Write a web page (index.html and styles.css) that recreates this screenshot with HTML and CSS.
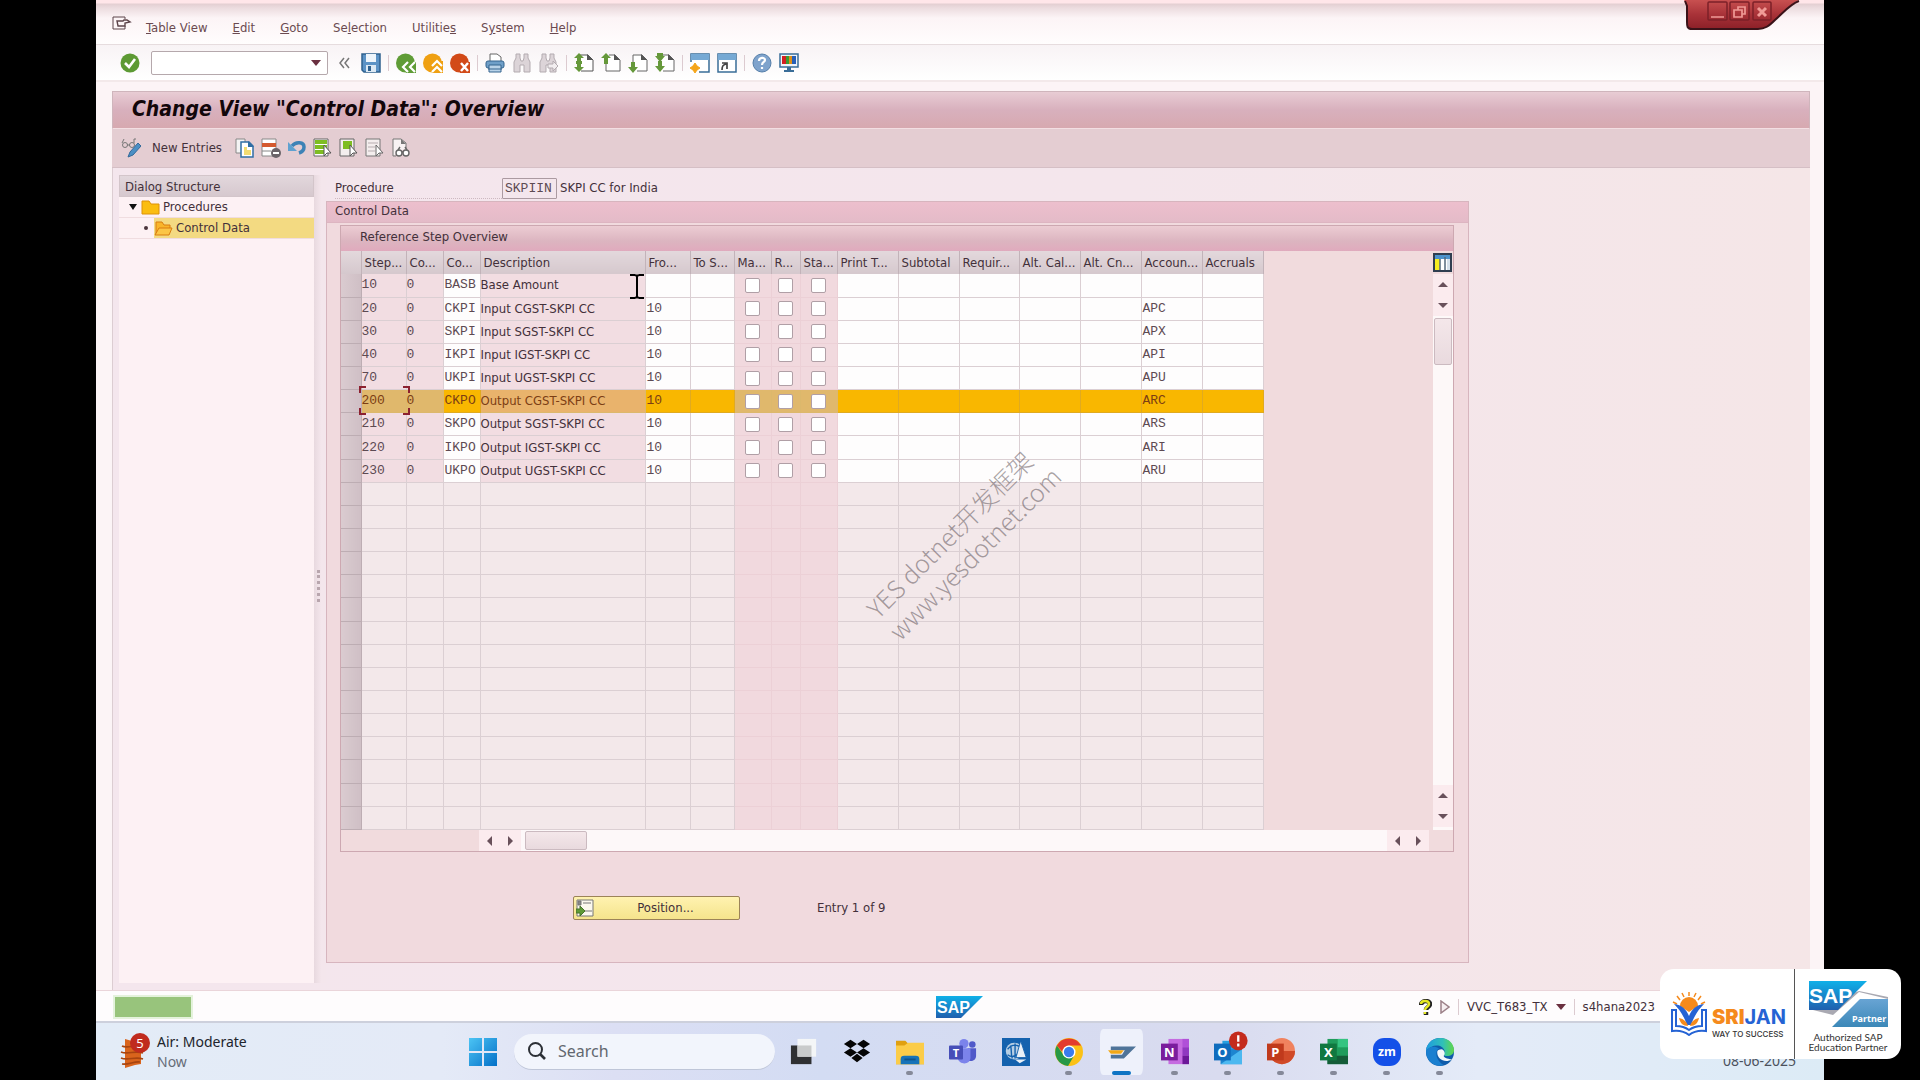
FILE: index.html
```html
<!DOCTYPE html>
<html lang="en">
<head>
    <meta charset="UTF-8">
    <meta name="viewport" content="width=device-width, initial-scale=1.0">
    <title>Change View "Control Data": Overview</title>
    <link rel="stylesheet" href="styles.css">
</head>
<body>
    <div class="desktop">
        <nav class="menubar">
            <svg class="menu-icon" width="20" height="16" viewBox="0 0 20 16" fill="none" stroke="#5c444a"><path d="M13 1H1v12h12v-3M13 1v2"/><path d="M5 5h6l1-1h3l3 2-5 1v3H6z" stroke-width="1.4"/></svg>
            <a href="#"><u>T</u>able View</a>
            <a href="#"><u>E</u>dit</a>
            <a href="#"><u>G</u>oto</a>
            <a href="#">Se<u>l</u>ection</a>
            <a href="#">Utilitie<u>s</u></a>
            <a href="#">S<u>y</u>stem</a>
            <a href="#"><u>H</u>elp</a>
        </nav>

        <div class="window-tab">
            <svg width="116" height="31" viewBox="0 0 116 31">
                <defs><linearGradient id="red" x1="0" y1="0" x2="0" y2="1"><stop offset="0" stop-color="#c85050"/><stop offset=".5" stop-color="#a83238"/><stop offset="1" stop-color="#8c2028"/></linearGradient></defs>
                <path d="M0 0h115c-9 4-16 13-24 20-6 6-10 9-17 9H8c-5 0-5-3-5-7V5z" fill="url(#red)"/>
                <path d="M1 1l2 5v16c0 4 0 7 5 7h66c7 0 11-3 17-9 8-7 15-16 24-19" fill="none" stroke="#3a1218" stroke-width="2"/>
                <g fill="none" stroke="#7c2028" stroke-width="1.5"><rect x="24" y="2" width="19" height="18" rx="1"/><rect x="46" y="2" width="19" height="18" rx="1"/><rect x="69" y="2" width="18" height="18" rx="1"/></g>
                <g fill="none" stroke="#f09a96" stroke-width="1.7"><path d="M27 17h13M50 10h8v7h-8zM54 10V7h7v7h-3"/><path d="M74 8l8 8M82 8l-8 8" stroke-width="3"/></g>
            </svg>
        </div>

        <div class="toolbar">
            <button class="icon" title="Enter"><svg viewBox="0 0 20 20"><circle cx="10" cy="10" r="9.5" fill="#5d9a34"/><path d="M5 10l4 4 6-8" fill="none" stroke="#fff" stroke-width="2.6"/></svg></button>
            <div class="command">
                <input type="text" aria-label="Command">
                <button title="History"><svg width="10" height="6" viewBox="0 0 10 6"><path d="M0 0h10L5 6z" fill="#6a3040"/></svg></button>
            </div>
            <button class="collapse" title="Collapse"><svg width="11" height="12" viewBox="0 0 11 12" fill="none" stroke="#777" stroke-width="1.5"><path d="M5 1L1 6l4 5M10 1L6 6l4 5"/></svg></button>
            <button class="icon" title="Save"><svg viewBox="0 0 20 20"><path d="M1 1h18v18H3l-2-2z" fill="#5c93c6" stroke="#2f618f" stroke-width="1.5"/><path d="M5 1h10v8H5z" fill="#eef5fb"/><path d="M5 12h10v7H5z" fill="#dce9f4"/><path d="M7 13h3v5H7z" fill="#2f618f"/></svg></button>
            <i class="sep"></i>
            <button class="icon" title="Back"><svg viewBox="0 0 20 20"><circle cx="9.500" cy="10" r="9.500" fill="#5f9c36"/><path d="M10 9h10v11H10z" fill="#5f9c36"/><path d="M12 9l-5 5 5 5M19 9l-5 5 5 5" fill="none" stroke="#fff" stroke-width="2.200"/></svg></button>
            <button class="icon" title="Exit"><svg viewBox="0 0 20 20"><circle cx="9.500" cy="10" r="9.500" fill="#efa012"/><path d="M9 8h11v12H9z" fill="#efa012"/><path d="M9 13l5-5 5 5M9 19l5-5 5 5" fill="none" stroke="#fff" stroke-width="2.200"/></svg></button>
            <button class="icon" title="Cancel"><svg viewBox="0 0 20 20"><circle cx="9.500" cy="10" r="9.500" fill="#d24a18"/><path d="M10 9h10v11H10z" fill="#d24a18"/><path d="M11 10l7 8M18 10l-7 8" stroke="#fff" stroke-width="2.400"/></svg></button>
            <i class="sep"></i>
            <button class="icon" title="Print"><svg viewBox="0 0 20 20"><path d="M5 8V1h7l4 3v4" fill="#fff" stroke="#666"/><rect x="1" y="8" width="18" height="7" rx="2" fill="#6f9fc8" stroke="#34658f"/><path d="M4 12h12v7H4z" fill="#b8d2e8" stroke="#34658f"/><path d="M3 16h14" stroke="#34658f"/></svg></button>
            <button class="icon" title="Find"><svg viewBox="0 0 20 20" fill="#dcd4d8" stroke="#b3abb0"><path d="M2 19V9l2-4V1h4v4l1 3h2l1-3V1h4v4l2 4v10h-6v-7H8v7z"/></svg></button>
            <button class="icon" title="Find next"><svg viewBox="0 0 20 20" fill="#dcd4d8" stroke="#b3abb0"><path d="M1 19V9l2-4V1h4v4l1 3h2l1-3V1h4v4l2 4v10h-6v-7H7v7z"/><path d="M9 11h5V8l5 5-5 5v-3H9z" fill="#f2eef0"/></svg></button>
            <i class="sep"></i>
            <button class="icon" title="First page"><svg viewBox="0 0 20 20"><path d="M6 2h8l5 5v11H7" fill="#fff" stroke="#555"/><path d="M13 1v6h6z" fill="#555"/><path d="M5 0l5 5H7v3H3V5H0zM3 11h4v3h3l-5 5-5-5h3zM2 8h6v3H2z" fill="#65983a"/></svg></button>
            <button class="icon" title="Previous page"><svg viewBox="0 0 20 20"><path d="M8 2h6l5 5v11H5V10" fill="#fff" stroke="#666"/><path d="M13 1v6h6z" fill="#555"/><path d="M5 0l5 5H7v6H3V5H0z" fill="#65983a"/></svg></button>
            <button class="icon" title="Next page"><svg viewBox="0 0 20 20"><path d="M5 11V2h9l5 5v11H9" fill="#fff" stroke="#666"/><path d="M13 1v6h6z" fill="#555"/><path d="M5 20l5-6H7V9H3v5H0z" fill="#65983a"/></svg></button>
            <button class="icon" title="Last page"><svg viewBox="0 0 20 20"><path d="M6 2h8l5 5v11H8" fill="#fff" stroke="#666"/><path d="M13 1v6h6z" fill="#555"/><path d="M2 0h6v3h2l-5 6-5-6h2zM3 8h4v5h3l-5 6-5-6h3z" fill="#65983a"/></svg></button>
            <i class="sep"></i>
            <button class="icon" title="New session"><svg viewBox="0 0 20 20"><path d="M1 1h18v18H1z" fill="#fff" stroke="#3a6d98" stroke-width="1.500"/><path d="M1 1h18v6H1z" fill="#76a9d4"/><path d="M0 9h9v11H0z" fill="#fff"/><path d="M5 10l2 3 3 2-3 2-2 3-2-3-3-2 3-2z" fill="#f5a51a" stroke="#f5a51a"/></svg></button>
            <button class="icon" title="Shortcut"><svg viewBox="0 0 20 20"><path d="M1 1h18v18H1z" fill="#fff" stroke="#3a6d98" stroke-width="1.500"/><path d="M1 1h18v6H1z" fill="#76a9d4"/><path d="M5 17c0-4 1-5 4-6M5 10h5v6" fill="none" stroke="#444" stroke-width="1.700"/></svg></button>
            <i class="sep"></i>
            <button class="icon" title="Help"><svg viewBox="0 0 20 20"><circle cx="10" cy="10" r="9" fill="#7fa3cc" stroke="#567fa9"/><path d="M7 8c0-4 6-4 6-1 0 2-3 2-3 5M10 14v2" fill="none" stroke="#fff" stroke-width="2.200"/></svg></button>
            <button class="icon" title="Layout"><svg viewBox="0 0 20 20"><path d="M1 1h18v13H1z" fill="#eef4fa" stroke="#3a6d98" stroke-width="1.500"/><path d="M3 3h4v8H3z" fill="#d41f1f"/><path d="M7 3h3v8H7z" fill="#3b9a32"/><path d="M10 3h3v8h-3z" fill="#e09018"/><path d="M13 3h4v8h-4z" fill="#2860b8"/><path d="M8 14h4v3h3v2H5v-2h3z" fill="#3a6d98"/></svg></button>
        </div>

        <div class="frame">
            <h1>Change View "Control Data": Overview</h1>

            <div class="app-toolbar">
                <button class="icon" title="Display/Change"><svg viewBox="0 0 20 20"><g fill="none" stroke="#777"><circle cx="4" cy="7" r="2.500"/><circle cx="11" cy="7" r="2.500"/><path d="M1 5l2-4M13 5V1h2M6 7h3"/></g><path d="M17 5l3 3-8 9-5 2 2-5z" fill="#4b8fc4" stroke="#33699a"/></svg></button>
                <button class="new-entries">New Entries</button>
                <button class="icon" title="Copy"><svg viewBox="0 0 20 20"><path d="M1 1h9v14H1z" fill="#f4f4f4" stroke="#888"/><path d="M6 4h8l4 4v11H6z" fill="#fff" stroke="#2f6ea5" stroke-width="1.500"/><path d="M13 3l6 6h-6z" fill="#2f6ea5"/><path d="M9 9h3v3h4v5H9z" fill="#f2dc72"/></svg></button>
                <button class="icon" title="Delete"><svg viewBox="0 0 20 20"><path d="M1 1h14v17H1z" fill="#fff" stroke="#888"/><path d="M1 5h14v4H1z" fill="#d45a30"/><path d="M1 13h9" stroke="#888"/><circle cx="15" cy="15" r="5" fill="#6b6469"/><path d="M12 15h6" stroke="#fff" stroke-width="2"/></svg></button>
                <button class="icon" title="Undo"><svg viewBox="0 0 20 20"><path d="M5 8c4-5 12-4 12 1 0 3-2 5-5 6" fill="none" stroke="#3d82b6" stroke-width="3.500"/><path d="M1 4v9h9z" fill="#5fa1d0"/></svg></button>
                <button class="icon" title="Select all"><svg viewBox="0 0 20 20"><path d="M1 1h14v17H1z" fill="#fff" stroke="#666"/><path d="M2 2h12v4H2zM2 7h12v4H2zM2 12h12v4H2z" fill="#7ebd22"/><path d="M11 7v11l3-3h4z" fill="#fff" stroke="#555"/></svg></button>
                <button class="icon" title="Select block"><svg viewBox="0 0 20 20"><path d="M1 1h14v17H1z" fill="#f4eeee" stroke="#666"/><path d="M4 3h9v8H4z" fill="#7ebd22"/><path d="M11 7v11l3-3h4z" fill="#fff" stroke="#555"/></svg></button>
                <button class="icon" title="Deselect all"><svg viewBox="0 0 20 20"><path d="M1 1h14v17H1z" fill="#f4eeee" stroke="#777"/><path d="M3 5h10M3 9h7M3 13h7" stroke="#b7adb0"/><path d="M11 7v11l3-3h4z" fill="#fff" stroke="#666"/></svg></button>
                <button class="icon" title="Print list"><svg viewBox="0 0 20 20"><path d="M2 18V1h8l5 4v5" fill="#f8f2f3" stroke="#777"/><path d="M10 1v5h5z" fill="#777"/><path d="M2 18h3" stroke="#777"/><g fill="#fff" stroke="#666" stroke-width="1.400"><circle cx="8" cy="15" r="3"/><circle cx="15" cy="15" r="3"/><path d="M7 12l2-3M16 12l-2-3M11 14h1"/></g></svg></button>
            </div>

            <div class="main">
                <aside class="tree">
                    <h2>Dialog Structure</h2>
                    <a href="#" class="node">
                        <svg class="caret" width="8" height="6" viewBox="0 0 8 6"><path d="M0 0h8L4 6z" fill="#111"/></svg>
                        <svg width="19" height="15" viewBox="0 0 19 15"><path d="M1 1h7l2 3h8v10H1z" fill="#fbbd10" stroke="#dd9208"/></svg>
                        <span>Procedures</span>
                    </a>
                    <a href="#" class="node child">
                        <i class="dot"></i>
                        <span class="picked">
                            <svg width="19" height="15" viewBox="0 0 19 15"><path d="M2 14V1h6l2 3h6v3" fill="#f9b52a" stroke="#d97d10"/><path d="M1 14l4-7h13l-3 7z" fill="#fbc545" stroke="#d97d10"/></svg>
                            Control Data
                        </span>
                    </a>
                </aside>

                <div class="splitter"><i></i></div>

                <main class="content">
                    <div class="procedure">
                        <label for="procedure">Procedure</label>
                        <input type="text" id="procedure" value="SKPIIN" readonly>
                        <span>SKPI CC for India</span>
                    </div>

                    <section class="group">
                        <h2>Control Data</h2>
                        <div class="table-control">
                            <h3>Reference Step Overview</h3>
                            <div class="table-area">
                                <table>
                                    <colgroup>
                                        <col class="w20"><col class="w45"><col class="w37"><col class="w37"><col class="w165">
                                        <col class="w45"><col class="w44"><col class="w37"><col class="w29"><col class="w37">
                                        <col class="w61"><col class="w61"><col class="w60"><col class="w61"><col class="w61"><col class="w61"><col class="w61">
                                    </colgroup>
                                    <thead>
                                        <tr>
                                            <th></th><th>Step...</th><th>Co...</th><th>Co...</th><th>Description</th><th>Fro...</th><th>To S...</th>
                                            <th>Ma...</th><th>R...</th><th>Sta...</th><th>Print T...</th><th>Subtotal</th><th>Requir...</th>
                                            <th>Alt. Cal...</th><th>Alt. Cn...</th><th>Accoun...</th><th>Accruals</th>
                                        </tr>
                                    </thead>
                                    <tbody id="steps"></tbody>
                                </table>
                                <div class="vscroll">
                                    <button class="config" title="Configuration"><svg width="19" height="19" viewBox="0 0 19 19"><path d="M1 1h17v17H1z" fill="#fff" stroke="#2f3e50" stroke-width="2"/><path d="M2 2h15v4H2z" fill="#4d93cc"/><path d="M2 6h5v11H2z" fill="#f5ee20"/><path d="M7 6v11M12 4v13" stroke="#56697c" stroke-width="1.500"/><path d="M14 6h3v11h-3z" fill="#d5e0ea"/></svg></button>
                                    <button class="arrow" title="Up"><svg width="10" height="5" viewBox="0 0 10 5"><path d="M0 5l5-5 5 5z"/></svg></button>
                                    <button class="arrow" title="Down"><svg width="10" height="5" viewBox="0 0 10 5"><path d="M0 0l5 5 5-5z"/></svg></button>
                                    <div class="track"><div class="thumb"></div></div>
                                    <button class="arrow" title="Page up"><svg width="10" height="5" viewBox="0 0 10 5"><path d="M0 5l5-5 5 5z"/></svg></button>
                                    <button class="arrow" title="Page down"><svg width="10" height="5" viewBox="0 0 10 5"><path d="M0 0l5 5 5-5z"/></svg></button>
                                </div>
                            </div>
                            <div class="hscroll">
                                <button class="arrow" title="Left"><svg width="5" height="10" viewBox="0 0 5 10"><path d="M5 0L0 5l5 5z"/></svg></button>
                                <button class="arrow" title="Right"><svg width="5" height="10" viewBox="0 0 5 10"><path d="M0 0l5 5-5 5z"/></svg></button>
                                <div class="track"><div class="thumb"></div></div>
                                <button class="arrow" title="Page left"><svg width="5" height="10" viewBox="0 0 5 10"><path d="M5 0L0 5l5 5z"/></svg></button>
                                <button class="arrow" title="Page right"><svg width="5" height="10" viewBox="0 0 5 10"><path d="M0 0l5 5-5 5z"/></svg></button>
                            </div>
                        </div>
                        <div class="position-row">
                            <button class="position">
                                <svg width="18" height="18" viewBox="0 0 18 18"><path d="M1 1h16v16H1z" fill="#fbf8ee" stroke="#777"/><path d="M2 2h3v4H2zM7 4h8M9 12h7" fill="#888" stroke="#777"/><path d="M0 10h4V7l5 5-5 5v-3H0z" fill="#5f9a36" stroke="#46742a"/></svg>
                                <span>Position...</span>
                            </button>
                            <span>Entry 1 of 9</span>
                        </div>
                    </section>
                </main>
            </div>
        </div>

        <div class="statusbar">
            <div class="progress"></div>
            <svg class="sap-logo" width="47" height="22" viewBox="0 0 47 22">
                <defs><linearGradient id="sap" x1="0" y1="0" x2="0" y2="1"><stop offset="0" stop-color="#10b0e8"/><stop offset="1" stop-color="#1f5fae"/></linearGradient></defs>
                <path d="M0 0h47L25 22H0z" fill="url(#sap)"/><text x="1" y="17" class="sap-text" font-size="16">SAP</text>
            </svg>
            <div class="status-right">
                <svg width="13" height="17" viewBox="0 0 13 17"><path d="M2 6c0-5 9-5 9-1 0 3-4 3-4 6M7 13v3" fill="none" stroke="#222" stroke-width="4.500"/><path d="M2 5c0-4 8-4 8 0 0 3-4 3-4 6M6 13v2" fill="none" stroke="#e5e822" stroke-width="2.500"/></svg>
                <svg width="10" height="14" viewBox="0 0 10 14"><path d="M1 1l8 6-8 6z" fill="#f6eef0" stroke="#9c8088" stroke-width="1.500"/></svg>
                <i class="sep"></i>
                <span>VVC_T683_TX</span>
                <svg width="10" height="6" viewBox="0 0 10 6"><path d="M0 0h10L5 6z" fill="#6a3040"/></svg>
                <i class="sep"></i>
                <span>s4hana2023</span>
            </div>
        </div>

        <footer class="taskbar">
            <div class="weather">
                <svg width="30" height="36" viewBox="0 0 30 36">
                    <path d="M5 7l7 2 5 2 4-1v22l-6 1-10 3z" fill="#d9641c"/>
                    <path d="M2 14c5 3 14-2 22 1M1 20c7 3 14-2 22 1M1 26c7 3 14-2 22 1M2 32c7 1 12-3 18-2" fill="none" stroke="#a8440f" stroke-width="1.600"/>
                    <circle cx="20" cy="11" r="10" fill="#c02b1e"/><text x="20" y="16" text-anchor="middle" class="badge-text">5</text>
                </svg>
                <p>Air: Moderate<br><small>Now</small></p>
            </div>
            <button class="start" title="Start"><svg width="28" height="28" viewBox="0 0 28 28"><defs><linearGradient id="win" x1="0" y1="0" x2="1" y2="1"><stop offset="0" stop-color="#4cc4f4"/><stop offset="1" stop-color="#0470c8"/></linearGradient></defs><path d="M0 0h13v13H0zM15 0h13v13H15zM0 15h13v13H0zM15 15h13v13H15z" fill="url(#win)"/></svg></button>
            <label class="search">
                <svg width="18" height="18" viewBox="0 0 18 18" fill="none" stroke="#2c3036" stroke-width="2"><circle cx="7.500" cy="7.500" r="6.500"/><path d="M12 12l5 5" stroke-width="2.600"/></svg>
                <input type="text" placeholder="Search">
            </label>
            <div class="apps">
                <button title="Task view"><svg viewBox="0 0 30 30"><path d="M1 8h22v20H1z" fill="#2f3032"/><path d="M8 1h20v19H8z" fill="#f4f6f7"/><path d="M8 8h15v12H8z" fill="#c9cbcb"/></svg></button>
                <button title="Dropbox"><svg viewBox="0 0 30 30"><path d="M8 2l7 4.500L8 11 1 6.500zM22 2l7 4.500-7 4.500-7-4.500zM8 11l7 4.500L8 20l-7-4.500zM22 11l7 4.500-7 4.500-7-4.500zM15 17l6 4.500-6 4.500-6-4.500z" fill="#050505"/></svg></button>
                <button title="File Explorer" class="open"><svg viewBox="0 0 30 30"><path d="M0 3h10l3 3h17v22H0z" fill="#e0a010"/><path d="M0 8h9l4-3h17v23H0z" fill="#fbcc48"/><path d="M5 28v-5c0-3 1-4 4-4h12c3 0 4 1 4 4v5z" fill="#1673b8"/><path d="M9 23h12" stroke="#0e548c" stroke-width="2"/></svg></button>
                <button title="Teams"><svg viewBox="0 0 30 30"><circle cx="16" cy="6" r="5" fill="#7b83eb"/><circle cx="25" cy="7" r="3.500" fill="#5059c9"/><path d="M20 11h9v8c0 5-5 7-9 5z" fill="#5059c9"/><path d="M9 11h14v10c0 8-12 9-14 0z" fill="#7b83eb"/><rect x="0" y="8" width="15" height="15" rx="1" fill="#464eb8"/><text x="7.500" y="20" text-anchor="middle" font-size="12">T</text></svg></button>
                <button title="SAP GUI"><svg viewBox="0 0 30 30"><path d="M0 0h30v30H0z" fill="#1462ae"/><circle cx="13" cy="14" r="9" fill="#b7cfe4"/><path d="M6 12c4-5 9-5 13-3M6 18c4 3 8 2 11-1M9 8c2 5 0 9 2 14M14 6v16" fill="none" stroke="#1462ae" stroke-width="1.500"/><path d="M20 3l6 18H15z" fill="#e8f0f7" stroke="#1462ae"/><path d="M14 23h12l-7 4z" fill="#e8f0f7"/></svg></button>
                <button title="Chrome" class="open"><svg viewBox="0 0 30 30"><circle cx="15" cy="15" r="15" fill="#fbc116"/><path d="M2 8a15 15 0 0 1 26 0H15a7 7 0 0 0-7 7z" fill="#e33b2e"/><path d="M2 8a15 15 0 0 0 12 22l7-12a7 7 0 0 1-12 0z" fill="#279847"/><circle cx="15" cy="15" r="7" fill="#fff"/><circle cx="15" cy="15" r="5.500" fill="#3a7cec"/></svg></button>
                <button title="SAP Logon" class="active"><svg viewBox="0 0 30 30"><path d="M3 9h27L17 22H3v-4h12l3-5H3z" fill="#4f7499"/><path d="M0 13h17l-3 4H3z" fill="#f2a818"/></svg></button>
                <button title="OneNote" class="open"><svg viewBox="0 0 30 30"><path d="M8 1h22v27H8z" fill="#c56be0"/><path d="M23 1h7v9h-7z" fill="#b050d8"/><path d="M23 10h7v9h-7z" fill="#9038c0"/><path d="M23 19h7v9h-7z" fill="#6c1898"/><path d="M0 6h18v18H0z" fill="#7a1d9c"/><text x="9" y="20" text-anchor="middle" font-size="14">N</text></svg></button>
                <button title="Outlook" class="open"><svg viewBox="0 0 30 30"><path d="M9 3h20v10H9z" fill="#28a0e0"/><path d="M7 12h23v16H7z" fill="#1c85d0"/><path d="M7 28l23-16v16z" fill="#4cb8f0"/><path d="M0 6h18v18H0z" fill="#0f6cbd"/><text x="9" y="20" text-anchor="middle" font-size="14">O</text><circle cx="26" cy="3" r="10" fill="#c42b1c"/><path d="M26-3v7M26 6v3" stroke="#fff" stroke-width="2.500"/></svg></button>
                <button title="PowerPoint" class="open"><svg viewBox="0 0 30 30"><circle cx="16" cy="14" r="14" fill="#f0825e"/><path d="M16 14h14a14 14 0 0 1-28 0z" fill="#d04a28"/><path d="M0 6h18v18H0z" fill="#c03a1c"/><text x="9" y="20" text-anchor="middle" font-size="14">P</text></svg></button>
                <button title="Excel" class="open"><svg viewBox="0 0 30 30"><path d="M8 1h22v27H8z" fill="#1f9c5c"/><path d="M19 1h11v9H19z" fill="#35c481"/><path d="M8 19h22v9H8z" fill="#145c38"/><path d="M0 6h18v18H0z" fill="#107840"/><text x="9" y="20" text-anchor="middle" font-size="14">X</text></svg></button>
                <button title="Zoom" class="open"><svg viewBox="0 0 30 30"><rect width="30" height="30" rx="12" fill="#1450e8"/><text x="15" y="19" text-anchor="middle" font-size="13">zm</text></svg></button>
                <button title="Edge" class="open"><svg viewBox="0 0 30 30"><defs><linearGradient id="edge" x1="0" y1="0" x2="1" y2="0"><stop offset="0" stop-color="#1e9be0"/><stop offset=".6" stop-color="#30c0b8"/><stop offset="1" stop-color="#62d848"/></linearGradient></defs><circle cx="15" cy="15" r="15" fill="#0f5cab"/><path d="M0 14C1-4 29-5 30 13c0 5-5 7-10 6-2-1 0-3 0-5C18 6 6 6 0 14z" fill="url(#edge)"/><path d="M12 15c0 8 8 12 16 8-6-1-9-2-9-4 2-2 1-6-2-7-3 0-5 1-5 3z" fill="#f4f8fb"/><path d="M0 14c3-5 9-6 14-3-4 2-5 12 5 18C8 32 0 24 0 14z" fill="#1a7fd0"/></svg></button>
            </div>
            <time>08-06-2025</time>
        </footer>

        <svg class="text-cursor" width="14" height="25" viewBox="0 0 14 25"><path d="M0 1h5M9 1h5M5 1l2 1 2-1M7 2v21M0 24h5M9 24h5M5 24l2-1 2 1" fill="none" stroke="#000" stroke-width="2"/></svg>
        <div class="watermark">YES dotnet开发框架<br>www.yesdotnet.com</div>
    </div>

    <div class="partner-card">
        <div class="srijan">
            <svg width="36" height="44" viewBox="0 0 36 44">
                <path d="M9 14a9 9 0 0 1 18 0l-9 6z" fill="#f58a1c"/>
                <path d="M18 4V0M13 5l-2-4M23 5l2-4M9 8L6 4M27 8l3-4M6 12l-4-2M30 12l4-2" stroke="#f58a1c" stroke-width="1.500"/>
                <path d="M5 18H1v21c7-1 12 0 17 4 5-4 10-5 17-4V18h-4M5 17v17c6 0 9 1 13 4 4-3 7-4 13-4V17" fill="none" stroke="#2563d4" stroke-width="2"/>
                <path d="M3 12c8 1 12 5 15 12 3-7 7-11 15-12-5 5-9 10-13 21h-4C12 22 8 17 3 12z" fill="#2563d4"/>
                <path d="M8 26c5 1 8 4 9 8-5 0-8-3-9-8zM28 26c-5 1-8 4-9 8 5 0 8-3 9-8z" fill="#f58a1c"/>
            </svg>
            <p class="brand"><b>SRI</b><em>JAN</em><small>WAY TO SUCCESS</small></p>
        </div>
        <div class="sap-partner">
            <svg width="80" height="46" viewBox="0 0 80 46">
                <defs><linearGradient id="partner" x1="0" y1="0" x2="0" y2="1"><stop offset="0" stop-color="#68a4d4"/><stop offset="1" stop-color="#3c88b8"/></linearGradient></defs>
                <path d="M0 28l24 6 26-23 29 7v-2L50 10z" fill="#a9a9b2"/>
                <path d="M0 0h58L29 29H0z" fill="url(#sap)"/><path d="M51 18h28v28H23z" fill="url(#partner)"/>
                <text x="0" y="22" class="sap-text" font-size="21">SAP</text><text x="43" y="41" class="partner-text">Partner</text>
            </svg>
            <p>Authorized SAP<br>Education Partner</p>
        </div>
    </div>

    <script src="script.js"></script>
</body>
</html>
```

FILE: styles.css
```css
* {
    box-sizing: border-box;
}
body {
    margin: 0;
    padding: 0 5%;
    min-height: 100vh;
    background: #000;
    color: #43303a;
    font-family: "DejaVu Sans Condensed", "DejaVu Sans", sans-serif;
    font-size: 13px;
    line-height: 20px;
}
h1, h2, h3, p {
    margin: 0;
    font-weight: normal;
}
a {
    color: inherit;
    text-decoration: none;
}
button, input {
    margin: 0;
    padding: 0;
    border: 0;
    background: none;
    color: inherit;
    font: inherit;
}
svg {
    display: block;
    flex: none;
}
.desktop {
    position: relative;
    display: flex;
    flex-direction: column;
    min-height: 100vh;
    overflow: hidden;
    background: #fefbfc;
}

/* menu and system toolbar */
.menubar {
    display: flex;
    align-items: center;
    gap: 25px;
    height: 45px;
    padding: 12px 16px 0;
    border-bottom: 1px solid #e6dcde;
    background: linear-gradient(#ffe6e9 0 3px, #e3cfd2 4px, #ecdcdf 8px, #fcf4f6 18px, #fffdfd);
    color: #6b4a50;
}
.menu-icon {
    margin: 0 -11px 8px 0;
}
.window-tab {
    position: absolute;
    top: 0;
    right: 24px;
}
.toolbar {
    display: flex;
    align-items: center;
    gap: 7px;
    height: 37px;
    padding: 0 24px;
    border-bottom: 2px solid #f3e9ea;
    background: linear-gradient(#f8f3f5, #fff);
}
.icon, .icon svg {
    width: 20px;
    height: 20px;
}
.command {
    display: flex;
    align-items: center;
    width: 177px;
    height: 24px;
    margin: 0 4px;
    border: 1px solid #b5a8ac;
    border-radius: 2px;
    background: #fff;
}
.command input {
    flex: 1;
    min-width: 0;
    height: 20px;
}
.command button {
    padding: 6px;
}
.collapse {
    margin-right: 4px;
}
.sep {
    width: 1px;
    height: 16px;
    background: #dccbd0;
}

/* screen frame */
.frame {
    display: flex;
    flex-direction: column;
    flex: 1;
    padding: 9px 14px 0 16px;
    background: #fcf4f6;
}
h1 {
    height: 38px;
    padding-left: 19px;
    border: 1px solid #cfb5bc;
    border-bottom-color: #f3dfe3;
    background: linear-gradient(#e8ccd4, #d8b0bd 50%, #d7a9b0);
    color: #12060a;
    font-size: 21px;
    font-style: italic;
    font-weight: bold;
    line-height: 35px;
}
.app-toolbar {
    display: flex;
    align-items: center;
    gap: 6px;
    height: 39px;
    padding-left: 9px;
    border-bottom: 1px solid #d5bfc5;
    background: #e4cdd2;
}
.new-entries {
    margin: 0 7px 0 5px;
}
.main {
    display: flex;
    flex: 1;
    padding: 7px 0 7px 6px;
    border-left: 1px solid #dccdd2;
    background: linear-gradient(90deg, #f4e6ed, #f4e6ec 60%, #f5e6e7);
}
.tree {
    width: 195px;
    background: #fdf1f4;
}
.tree h2 {
    height: 22px;
    padding-left: 5px;
    border: 1px solid #d3c5ca;
    background: linear-gradient(#e2d7dc, #d6c8ce);
    font-size: 13px;
    line-height: 21px;
}
.node {
    display: flex;
    align-items: center;
    gap: 3px;
    height: 20px;
}
.caret {
    margin: 0 1px 0 10px;
}
.child {
    height: 22px;
    border: 1px solid #f0dde0;
    border-width: 1px 0;
}
.dot {
    width: 4px;
    height: 4px;
    margin: 0 3px 0 25px;
    border-radius: 2px;
    background: #4a343c;
}
.picked {
    display: flex;
    flex: 1;
    gap: 3px;
    align-items: center;
    background: #f3da82;
}
.splitter {
    display: flex;
    align-items: center;
    width: 12px;
    padding-top: 14px;
    background: linear-gradient(90deg, #e8d9df, #f4e6ec 60%);
}
.splitter i {
    width: 4px;
    height: 32px;
    margin-left: 3px;
    border-left: 3px dotted #b9a6ae;
}
.content {
    flex: 1;
    padding-top: 3px;
}
.procedure {
    display: flex;
    margin-left: 9px;
}
.procedure label {
    width: 167px;
    border-bottom: 1px dotted #cdb9c1;
}
.procedure input {
    width: 55px;
    height: 21px;
    padding-left: 2px;
    border: 1px solid #ab9aa1;
    border-radius: 1px;
    color: #5d4a52;
    font-family: "Liberation Mono", monospace;
}
.procedure span {
    padding-left: 3px;
}
.group {
    max-width: 1143px;
    margin-top: 2px;
    border: 1px solid #d7b5be;
    background: #f1dade;
}
.group h2 {
    height: 21px;
    padding-left: 8px;
    border-bottom: 1px solid #ddb5c1;
    background: linear-gradient(#edbfcd, #e4bbc8);
    font-size: 13px;
    line-height: 18px;
}
.table-control {
    margin: 2px 14px 0 13px;
    border: 1px solid #cda8b1;
    background: #f1dbdd;
}
.table-control h3 {
    height: 25px;
    padding-left: 19px;
    background: linear-gradient(#ecccd3, #dcb5c0 60%, #e0aabd);
    font-size: 13px;
    line-height: 21px;
}
.table-area {
    display: flex;
    justify-content: space-between;
}

/* step table */
table {
    width: 922px;
    height: 579px;
    border-collapse: collapse;
    table-layout: fixed;
}
.w20 { width: 20px; }
.w29 { width: 29px; }
.w37 { width: 37px; }
.w44 { width: 44px; }
.w45 { width: 45px; }
.w60 { width: 60px; }
.w61 { width: 61px; }
.w165 { width: 165px; }
th {
    height: 23px;
    padding: 0 0 0 3px;
    border-right: 1px solid #c2b3b9;
    background: linear-gradient(#e3d8dc, #d5c8cd);
    font-weight: normal;
    text-align: left;
    white-space: nowrap;
    overflow: hidden;
}
td {
    position: relative;
    height: 23px;
    padding: 0 0 0 1px;
    border: 1px solid #dbcfd3;
    border-top: 0;
    border-left: 0;
    background: #fefdfd;
    line-height: 20px;
    white-space: nowrap;
}
td.fixed {
    padding-left: 0;
    background: #f2dde2;
}
td.code {
    color: #5d4a52;
    font-family: "Liberation Mono", monospace;
}
td.check {
    padding: 0;
    border-color: #ecd0d6;
    background: #f1d9de;
}
tr.empty td {
    background: #f3e8ea;
}
tr.empty td.check {
    background: #f1d9de;
}
tr.selected td {
    border-color: #e0aa20;
    background: #f9b700;
    color: #7c3e14;
}
tr.selected td.fixed, tr.selected td.check {
    border-color: #dcb86c;
    background: #e0b86c;
}
tr.selected td.fixed.text {
    background: #e9b36c;
}
tr td.handle, tr.empty td.handle, tr.selected td.handle {
    border-color: #bdadb3;
    background: linear-gradient(90deg, #dacbd0, #cfbfc5);
}
td input {
    display: block;
    appearance: none;
    width: 15px;
    height: 15px;
    margin: 0 auto;
    border: 1px solid #b09fa6;
    border-radius: 2px;
    background: #fff;
}
.focus {
    position: absolute;
    top: -4px;
    left: -3px;
    z-index: 1;
}

/* scroll bars */
.vscroll {
    display: flex;
    flex-direction: column;
    width: 20px;
    padding-bottom: 3px;
    background: #fdf8f8;
}
.config {
    height: 23px;
    background: #f1dbdd;
}
.config svg {
    margin-top: 0;
}
.arrow {
    display: flex;
    align-items: center;
    justify-content: center;
    width: 21px;
    height: 21px;
    background: #fbebee;
    fill: #68505a;
}
.vscroll .arrow {
    width: 20px;
}
.track {
    flex: 1;
}
.thumb {
    border: 1px solid #cbbac0;
    border-radius: 2px;
    background: linear-gradient(#f4e7ea, #e9dade);
}
.vscroll .thumb {
    width: 18px;
    height: 47px;
    margin: 2px 1px;
}
.hscroll {
    display: flex;
    margin: 0 24px 0 138px;
    height: 21px;
    background: #fdf8f9;
}
.hscroll .thumb {
    width: 62px;
    height: 19px;
    margin: 1px 4px;
}
.position-row {
    display: flex;
    align-items: center;
    gap: 77px;
    padding: 44px 0 42px 246px;
}
.position {
    display: flex;
    align-items: center;
    width: 167px;
    height: 24px;
    padding: 0 2px;
    border: 1px solid #9c8358;
    border-radius: 2px;
    background: linear-gradient(#fff2b0, #f5e48c);
    color: #43303a;
}
.position span {
    flex: 1;
}

/* status bar and taskbar */
.statusbar {
    position: relative;
    display: flex;
    align-items: center;
    justify-content: space-between;
    height: 33px;
    padding: 2px 169px 0 19px;
    border-top: 1px solid #ead5da;
    border-bottom: 2px solid #cdd0dc;
    background: #fefcfd;
}
.progress {
    width: 76px;
    height: 20px;
    background: #98c47c;
    outline: 2px solid #e4f2dc;
}
.sap-logo {
    position: absolute;
    left: 50%;
    margin-left: -24px;
}
.sap-text {
    fill: #fff;
    font-family: "Liberation Sans", Arial, sans-serif;
    font-weight: bold;
}
.status-right {
    display: flex;
    align-items: center;
    gap: 8px;
}
.taskbar {
    display: flex;
    align-items: center;
    height: 57px;
    padding: 0 28px 0 24px;
    background: linear-gradient(90deg, #e3ecf7, #e4eaf7 20%, #dcdff4 30%, #d3dcf3 42%, #d9dbef 65%, #e4ebf8 80%, #dcebf6);
    font-family: "Noto Sans", sans-serif;
    font-size: 14px;
}
.weather {
    display: flex;
    gap: 7px;
    width: 349px;
    color: #20242c;
}
.weather p {
    line-height: 20px;
}
.weather small {
    color: #666c78;
    font-size: 14px;
}
.badge-text {
    fill: #fff;
    font-size: 13px;
}
.search {
    display: flex;
    align-items: center;
    gap: 12px;
    width: 261px;
    height: 36px;
    margin: 0 2px 0 17px;
    padding: 0 14px;
    border-bottom: 1px solid #bfc6d8;
    border-radius: 18px;
    background: #f2f5fc;
}
.search input {
    flex: 1;
    min-width: 0;
    font-size: 16px;
}
.search input::placeholder {
    color: #62676f;
    opacity: 1;
}
.apps {
    display: flex;
}
.apps button {
    position: relative;
    width: 53px;
    height: 46px;
}
.apps svg {
    height: 28px;
    margin: 0 auto;
    overflow: visible;
}
.apps text {
    fill: #fff;
    font-weight: bold;
}
.apps .open::after, .apps .active::after {
    content: "";
    position: absolute;
    bottom: 0;
    left: 23px;
    width: 7px;
    height: 4px;
    border-radius: 2px;
    background: #858999;
}
.apps .active {
    border: solid transparent;
    border-width: 0 5px;
    border-radius: 8px;
    background: #eef1fb padding-box;
}
.apps .active::after {
    left: 12px;
    width: 19px;
    background: #0f74c4;
}
time {
    margin: 19px 0 0 auto;
    color: #4b505c;
}

/* things lying over the screen */
.text-cursor {
    position: absolute;
    top: 274px;
    left: 534px;
}
.watermark {
    position: absolute;
    top: 511px;
    left: 752px;
    color: rgba(95, 85, 90, 0.55);
    font-family: "Noto Sans CJK SC", sans-serif;
    font-size: 25px;
    font-weight: 300;
    line-height: 31px;
    transform: rotate(-45deg);
}
.partner-card {
    position: absolute;
    top: 969px;
    right: 19px;
    display: flex;
    height: 90px;
    border-radius: 14px;
    background: #fff;
}
.srijan {
    display: flex;
    align-items: center;
    gap: 5px;
    width: 135px;
    padding-left: 11px;
    border-right: 1px solid #555;
}
.brand {
    padding-top: 16px;
    color: #2563d4;
    font-family: Inter, sans-serif;
    font-size: 20px;
    font-weight: bold;
    line-height: 24px;
}
.brand b {
    color: #f58a1c;
}
.brand em {
    font-style: normal;
}
.brand small {
    display: block;
    color: #333;
    font-size: 8px;
    font-weight: 500;
    line-height: 10px;
}
.sap-partner {
    width: 106px;
    padding: 12px 0 0 14px;
}
.sap-partner p {
    margin: 5px 0 0 -14px;
    color: #333;
    font-family: Lato, sans-serif;
    font-size: 10px;
    line-height: 10px;
    text-align: center;
}
.partner-text {
    fill: #fff;
    font-family: "Noto Sans", sans-serif;
    font-size: 9px;
    font-weight: bold;
}
```

FILE: script.js
```javascript
const steps = [
    ['10', 'BASB', 'Base Amount', '', ''],
    ['20', 'CKPI', 'Input CGST-SKPI CC', '10', 'APC'],
    ['30', 'SKPI', 'Input SGST-SKPI CC', '10', 'APX'],
    ['40', 'IKPI', 'Input IGST-SKPI CC', '10', 'API'],
    ['70', 'UKPI', 'Input UGST-SKPI CC', '10', 'APU'],
    ['200', 'CKPO', 'Output CGST-SKPI CC', '10', 'ARC'],
    ['210', 'SKPO', 'Output SGST-SKPI CC', '10', 'ARS'],
    ['220', 'IKPO', 'Output IGST-SKPI CC', '10', 'ARI'],
    ['230', 'UKPO', 'Output UGST-SKPI CC', '10', 'ARU']
];
const selected = '200';
const emptyRows = 15;

// corner marks round the focused cell
const focus = '<svg class="focus" width="51" height="29" viewBox="0 0 51 29" fill="none" stroke="#8c2030" stroke-width="2"><path d="M1 7V1h6M44 1h6v6M50 22v6h-6M7 28H1v-6"/></svg>';

const check = (step, name) => `<td class="check"><input type="checkbox" aria-label="${name} ${step}"></td>`;

let html = '';
for (const [step, code, text, from, account] of steps) {
    html += `<tr class="${step === selected ? 'selected' : ''}">
        <td class="handle"></td>
        <td class="fixed code">${step}${step === selected ? focus : ''}</td>
        <td class="fixed code">0</td>
        <td class="code">${code}</td>
        <td class="fixed text">${text}</td>
        <td class="code">${from}</td>
        <td></td>
        ${check(step, 'Manual')}${check(step, 'Required')}${check(step, 'Statistical')}
        ${'<td></td>'.repeat(5)}
        <td class="code">${account}</td>
        <td></td>
    </tr>`;
}
for (let i = 0; i < emptyRows; i++) {
    html += `<tr class="empty"><td class="handle"></td>${'<td></td>'.repeat(6)}${'<td class="check"></td>'.repeat(3)}${'<td></td>'.repeat(7)}</tr>`;
}
document.getElementById('steps').innerHTML = html;
```
